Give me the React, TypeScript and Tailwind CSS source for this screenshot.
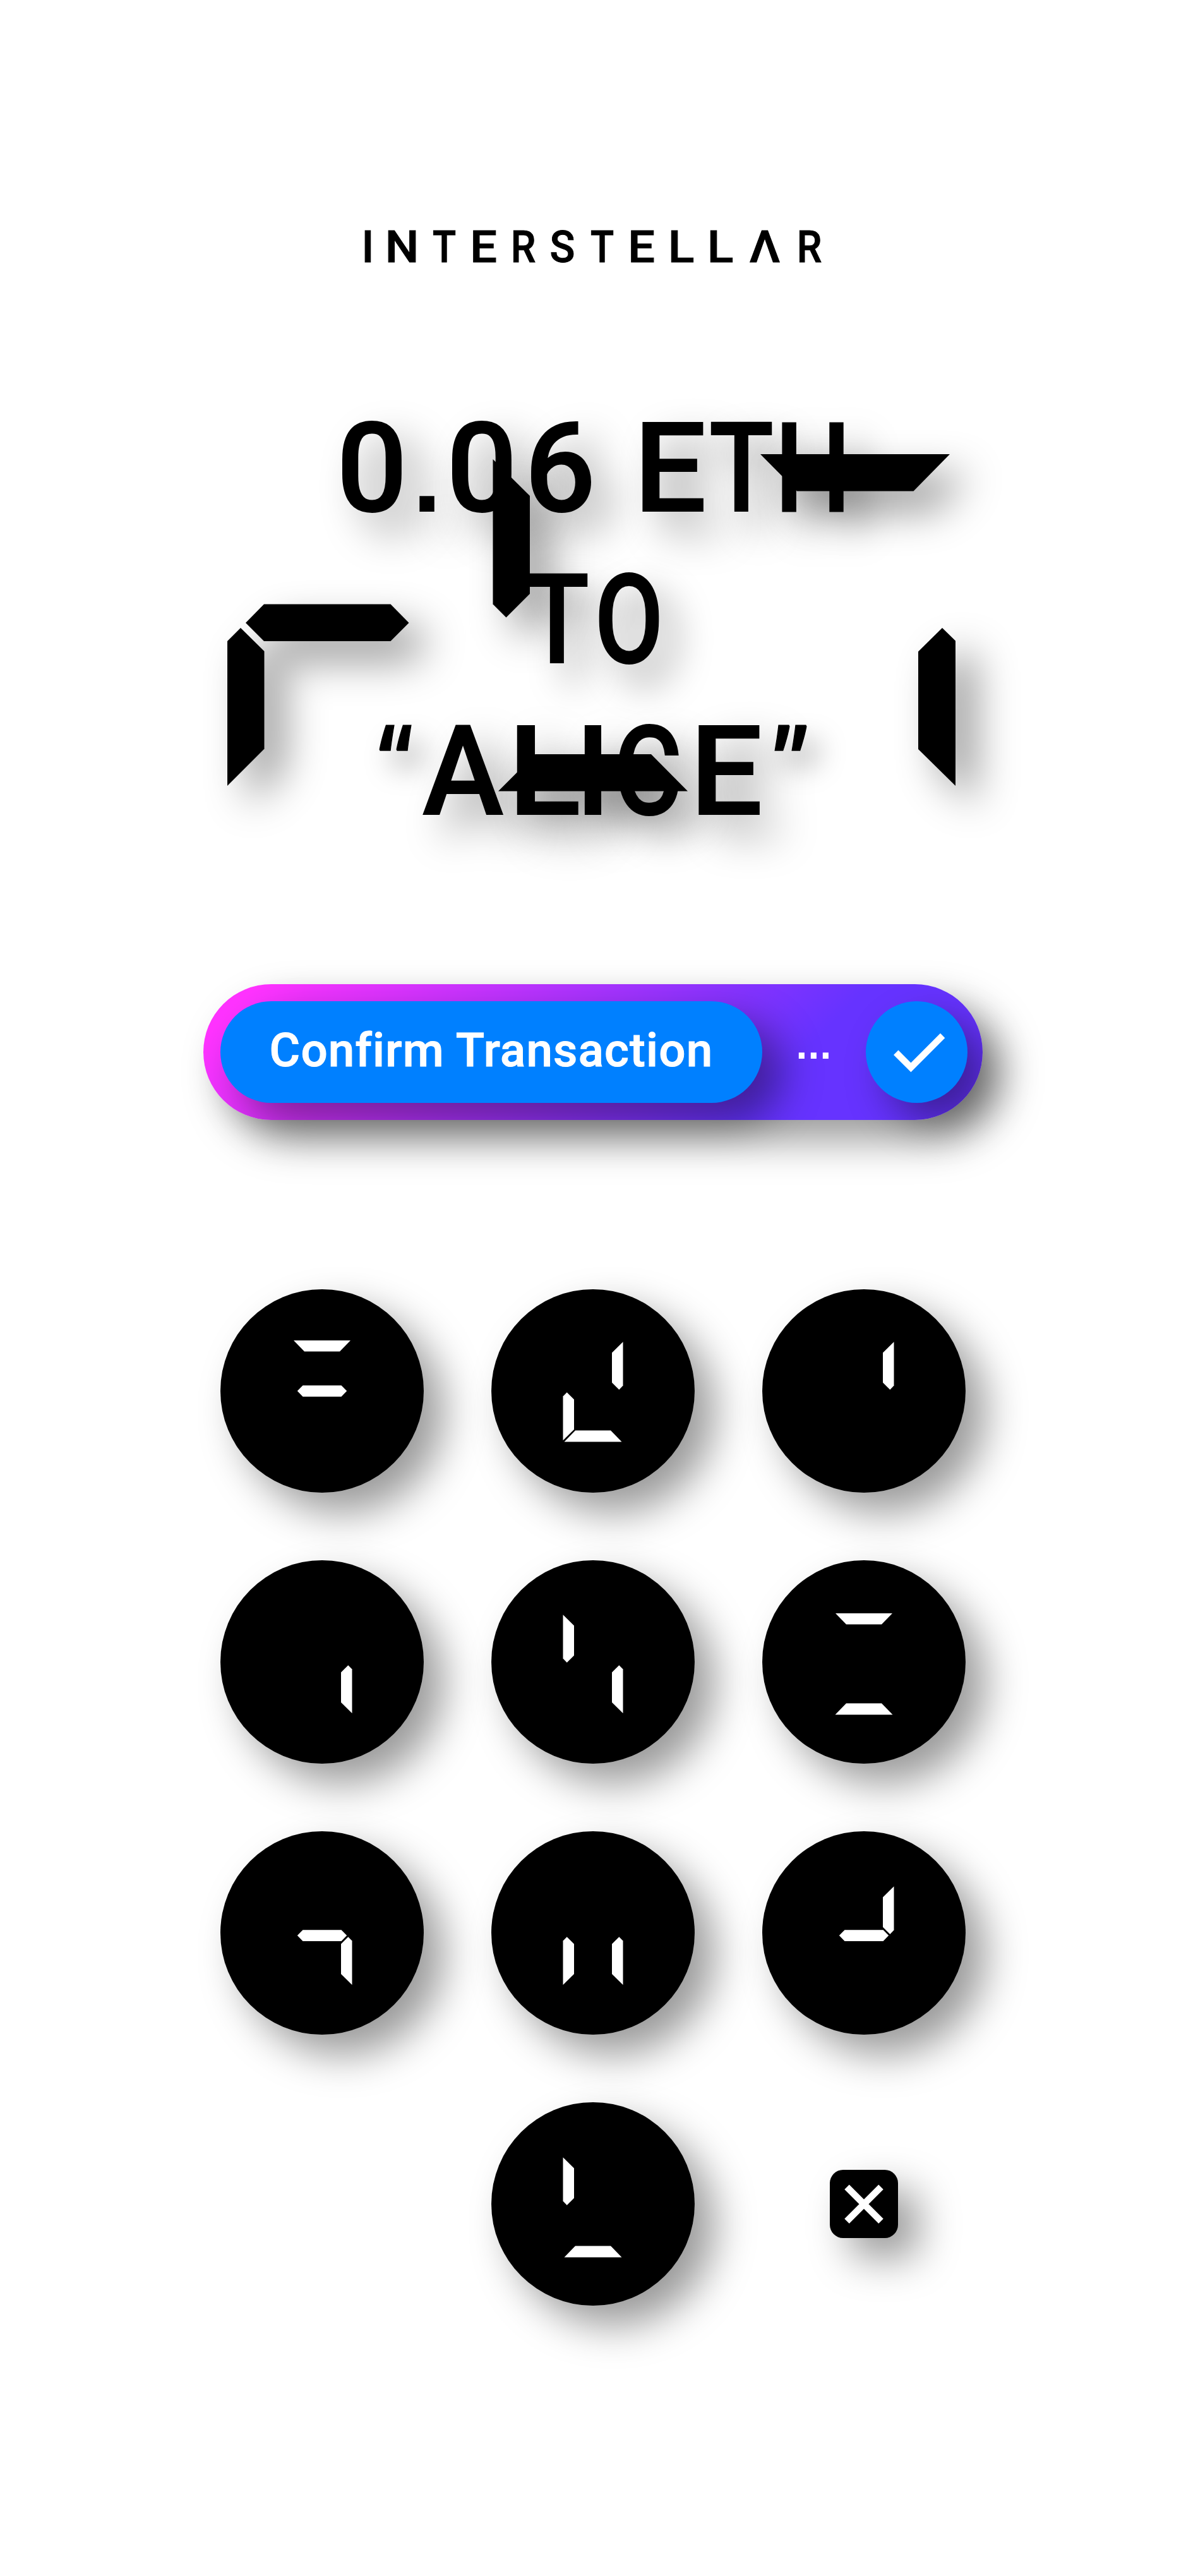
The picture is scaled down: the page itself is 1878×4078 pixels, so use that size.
import React from "react";

type Glyph = { c: string; w: number; s?: number; kind?: "quote" | "dot" };

const LOGO: Glyph[] = [
  { c: "I", w: 17 },
  { c: "N", w: 91, s: 1.08 },
  { c: "T", w: 43, s: 0.87 },
  { c: "E", w: 81, s: 1.08 },
  { c: "R", w: 45, s: 0.9 },
  { c: "S", w: 79, s: 0.94 },
  { c: "T", w: 47, s: 0.87 },
  { c: "E", w: 77, s: 1.08 },
  { c: "L", w: 49, s: 1.1 },
  { c: "L", w: 75, s: 1.1 },
  { c: "Λ", w: 66, s: 1.08 },
  { c: "R", w: 75, s: 0.9 },
];

const AMOUNT: Glyph[] = [
  { c: "0", w: 124 },
  { c: ".", w: 50, kind: "dot" },
  { c: "0", w: 124 },
  { c: "6", w: 124 },
  { c: "\u00a0", w: 48 },
  { c: "E", w: 128, s: 1.03 },
  { c: "T", w: 98, s: 0.85 },
  { c: "H", w: 128, s: 0.86 },
];

const TO: Glyph[] = [
  { c: "T", w: 114, s: 0.85 },
  { c: "O", w: 114, s: 0.8 },
];

const RECIPIENT: Glyph[] = [
  { c: "“", w: 76, kind: "quote" },
  { c: "A", w: 138, s: 0.98 },
  { c: "L", w: 120, s: 1.08 },
  { c: "I", w: 34 },
  { c: "C", w: 140, s: 0.84 },
  { c: "E", w: 108, s: 1.03 },
  { c: "”", w: 96, kind: "quote" },
];

const KIND_CLASS = {
  quote:
    "inline-flex justify-center font-['Open_Sans'] font-bold leading-[222px] origin-[50%_47px] [transform:scale(0.6,0.82)]",
  dot: "inline-flex justify-center font-['Liberation_Sans'] font-bold text-[152px] leading-[200px]",
};

function Spaced({ glyphs }: { glyphs: Glyph[] }) {
  return (
    <>
      {glyphs.map((g, i) => (
        <span
          key={i}
          className={g.kind ? KIND_CLASS[g.kind] : "inline-flex justify-center"}
          style={{ width: g.w, transform: g.s ? `scaleX(${g.s})` : undefined }}
        >
          {g.c}
        </span>
      ))}
    </>
  );
}

/* Large seven-segment fragments scattered over the headline. */
const FRAGMENTS = [
  "360,1015 381,994 418.5,1031 418.5,1185.5 360,1244",
  "389,986 418,956.5 618.5,956.5 647.5,986 618.5,1015 418,1015",
  "780.5,727 839,785 839,940 801.5,977.5 780.5,956.5",
  "1204,719 1504,719 1446.5,777.5 1262,777.5",
  "1454,1031.5 1492,994 1513,1014.5 1513,1244 1454,1186",
  "789,1252.5 847.5,1194 1031,1194 1089,1252.5",
];

/* Segments of a key's digit on a 322 unit square. */
const SEG = {
  top: "116,81 206,81 189,98.6 133,98.6",
  mid: "121.8,161 130.5,152.3 191.5,152.3 200.2,161 191.5,170 130.5,170",
  bottom: "115.5,241.6 133,223.4 189,223.4 206.5,241.6",
  tl: "113.5,83.3 131,100.5 131,147.7 119.7,159 113.5,152.5",
  tr: "208.5,83.3 191,100.5 191,147.7 202.3,159 208.5,152.5",
  bl: "113.5,239.3 131,222 131,174.5 119.7,163.3 113.5,169.5",
  br: "208.5,239.3 191,222 191,174.5 202.3,163.3 208.5,169.5",
};

type SegName = keyof typeof SEG;

const KEYS: { segs: SegName[]; dy: number }[] = [
  { segs: ["top", "mid"], dy: 0 },
  { segs: ["tr", "bl", "bottom"], dy: 0 },
  { segs: ["tr"], dy: 0 },
  { segs: ["br"], dy: 3 },
  { segs: ["tl", "br"], dy: 3 },
  { segs: ["top", "bottom"], dy: 3 },
  { segs: ["mid", "br"], dy: 4 },
  { segs: ["bl", "br"], dy: 4 },
  { segs: ["mid", "tr"], dy: 4 },
];

function Key({ segs, dy }: { segs: SegName[]; dy: number }) {
  return (
    <button className="size-[322px] rounded-full bg-black shadow-[32px_32px_64px_rgba(0,0,0,0.4)]">
      <svg viewBox="0 0 322 322" className="size-full" fill="white">
        <g transform={`translate(0 ${dy})`}>
          {segs.map((s) => (
            <polygon key={s} points={SEG[s]} />
          ))}
        </g>
      </svg>
    </button>
  );
}

export default function App() {
  return (
    <main className="flex h-[4078px] w-[1878px] flex-col items-center overflow-hidden bg-white pt-[350px] font-[Roboto,sans-serif] text-black">
      <header
        aria-label="Interstellar"
        className="h-[82px] whitespace-nowrap pl-[15px] text-[70px] leading-[82px] font-medium [-webkit-text-stroke:1px_black]"
      >
        <Spaced glyphs={LOGO} />
      </header>

      <section className="relative mt-[190px] h-[720px] w-full text-center text-[197px] leading-[240px] font-medium">
        <h1 className="[-webkit-text-stroke:2px_black] [text-shadow:32px_32px_64px_rgba(0,0,0,0.4)]">
          <span className="block h-[240px] whitespace-nowrap">
            <Spaced glyphs={AMOUNT} />
          </span>
          <span className="block h-[240px] whitespace-nowrap">
            <Spaced glyphs={TO} />
          </span>
          <span className="block h-[240px] whitespace-nowrap pl-[10px]">
            <Spaced glyphs={RECIPIENT} />
          </span>
        </h1>
        <svg viewBox="0 622 1878 720" className="absolute inset-0 size-full overflow-visible">
          <defs>
            <filter id="fall" filterUnits="userSpaceOnUse" x="200" y="560" width="1500" height="900" colorInterpolationFilters="sRGB">
              <feDropShadow dx="32" dy="32" stdDeviation="32" floodColor="#000" floodOpacity="0.4" />
            </filter>
          </defs>
          <g filter="url(#fall)">
            {FRAGMENTS.map((p) => (
              <polygon key={p} points={p} />
            ))}
          </g>
        </svg>
      </section>

      <div className="mt-[216px] flex h-[215px] w-[1234px] items-center justify-between rounded-full bg-[linear-gradient(135deg,#ff33ff_6%,#6633ff_73%)] pr-6 pl-[27px] text-white shadow-[32px_32px_64px_rgba(0,0,0,0.4)]">
        <button className="h-[161px] w-[858px] rounded-full bg-[#0080ff] pb-1 text-[74.5px] leading-none font-medium tracking-[1.2px] whitespace-nowrap shadow-[32px_32px_64px_rgba(0,0,0,0.4)] [-webkit-text-stroke:1px_white]">
          Confirm Transaction
        </button>
        <span className="pb-[23px] font-['Liberation_Sans'] text-[64px] leading-[80px] font-bold tracking-[1.2px]">
          ...
        </span>
        <button
          aria-label="Confirm"
          className="size-[161px] rounded-full bg-[#0080ff] shadow-[32px_32px_64px_rgba(0,0,0,0.4)]"
        >
          <svg viewBox="0 0 161 161" className="size-full" fill="white">
            <polygon points="44,85 51.5,77.6 71.4,97.5 118,50.7 125.3,58.2 71.4,112.2" />
          </svg>
        </button>
      </div>

      <div className="mt-[268px] grid grid-cols-[322px_322px_322px] gap-[107px]">
        {KEYS.map((k, i) => (
          <Key key={i} segs={k.segs} dy={k.dy} />
        ))}
        <div />
        <Key segs={["tl", "bottom"]} dy={4} />
        <div className="flex items-center justify-center">
          <button
            aria-label="Delete"
            className="size-[108px] rounded-[21px] bg-black shadow-[32px_32px_64px_rgba(0,0,0,0.4)]"
          >
            <svg viewBox="0 0 108 108" className="size-full" stroke="white" strokeWidth="10.6" fill="none">
              <path d="M27 27.3 81 81.3M81 27.3 27 81.3" />
            </svg>
          </button>
        </div>
      </div>
    </main>
  );
}
